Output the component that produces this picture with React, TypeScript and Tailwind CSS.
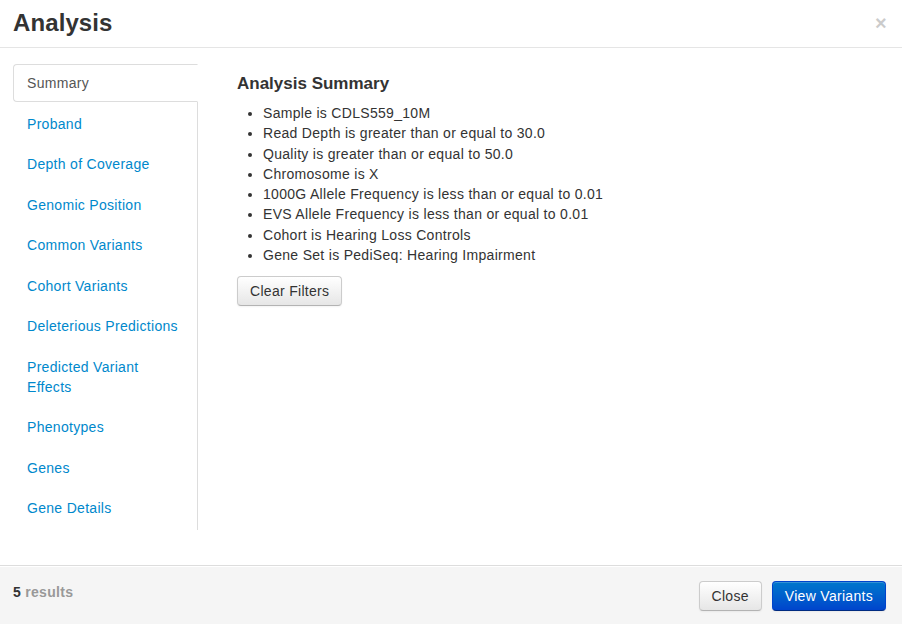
import React from 'react'

const sections = [
  'Proband',
  'Depth of Coverage',
  'Genomic Position',
  'Common Variants',
  'Cohort Variants',
  'Deleterious Predictions',
  'Predicted Variant Effects',
  'Phenotypes',
  'Genes',
  'Gene Details',
]

const filters = [
  'Sample is CDLS559_10M',
  'Read Depth is greater than or equal to 30.0',
  'Quality is greater than or equal to 50.0',
  'Chromosome is X',
  '1000G Allele Frequency is less than or equal to 0.01',
  'EVS Allele Frequency is less than or equal to 0.01',
  'Cohort is Hearing Loss Controls',
  'Gene Set is PediSeq: Hearing Impairment',
]

const btn =
  'h-[30px] rounded border px-3 leading-5 shadow-[inset_0_1px_0_rgba(255,255,255,0.2),0_1px_2px_rgba(0,0,0,0.05)]'

export default function App() {
  return (
    <div
      className="flex h-[624px] w-[902px] flex-col overflow-hidden bg-white text-[14px] leading-5 tracking-[0.3px] text-[#333]"
      style={{ fontFamily: '"Liberation Sans", Arial, sans-serif' }}
    >
      {/* Header */}
      <div className="flex h-[48px] shrink-0 items-center justify-between border-b border-[#e5e5e5] px-[13px] pb-[2px]">
        <h3 className="text-[24px] font-bold leading-[30px] tracking-[0.1px] text-[#333]">Analysis</h3>
        <button className="mr-[2px] text-[20px] font-bold leading-5 text-[#000] opacity-20">×</button>
      </div>

      {/* Body */}
      <div className="flex flex-1 items-start px-[13px] pt-4">
        {/* Tabs */}
        <ul className="mr-[19px] w-[185px] shrink-0 border-r border-[#ddd]">
          <li className="mb-[2.5px]">
            <span className="-mr-px block rounded-l border border-[#ddd] border-r-transparent bg-white py-2 pr-3 pl-[13px] leading-5 text-[#555]">
              Summary
            </span>
          </li>
          {sections.map((s) => (
            <li key={s} className="mb-[2.5px]">
              <a href="#" className="block border border-transparent py-2 pr-3 pl-[13px] leading-5 text-[#0088cc]">
                {s}
              </a>
            </li>
          ))}
        </ul>

        {/* Content */}
        <div className="flex-1 pl-5">
          <h4 className="mt-[10px] mb-[9px] text-[17px] font-bold leading-5 tracking-normal text-[#333]">Analysis Summary</h4>
          <ul className="mb-[11px] ml-[26px] list-disc">
            {filters.map((f) => (
              <li key={f} className="leading-[20.3px]">
                {f}
              </li>
            ))}
          </ul>
          <button className={`${btn} border-[#ccc] border-b-[#b3b3b3] bg-gradient-to-b from-white to-[#e6e6e6] text-[#333]`}>
            Clear Filters
          </button>
        </div>
      </div>

      {/* Footer */}
      <div className="flex h-[59px] shrink-0 items-center justify-between border-t border-[#ddd] bg-[#f5f5f5] pt-[2px] pr-[16px] pl-[13px] shadow-[inset_0_1px_0_#fff]">
        <div className="mb-[8px] font-bold text-[#999]">
          <span className="text-[#333]">5</span> results
        </div>
        <div className="flex gap-[10px]">
          <button className={`${btn} border-[#ccc] border-b-[#b3b3b3] bg-gradient-to-b from-white to-[#e6e6e6] text-[#333]`}>
            Close
          </button>
          <button className={`${btn} border-[#0044cc] border-b-[#002a80] bg-gradient-to-b from-[#0077cc] to-[#0044cc] text-white`}>
            View Variants
          </button>
        </div>
      </div>
    </div>
  )
}
